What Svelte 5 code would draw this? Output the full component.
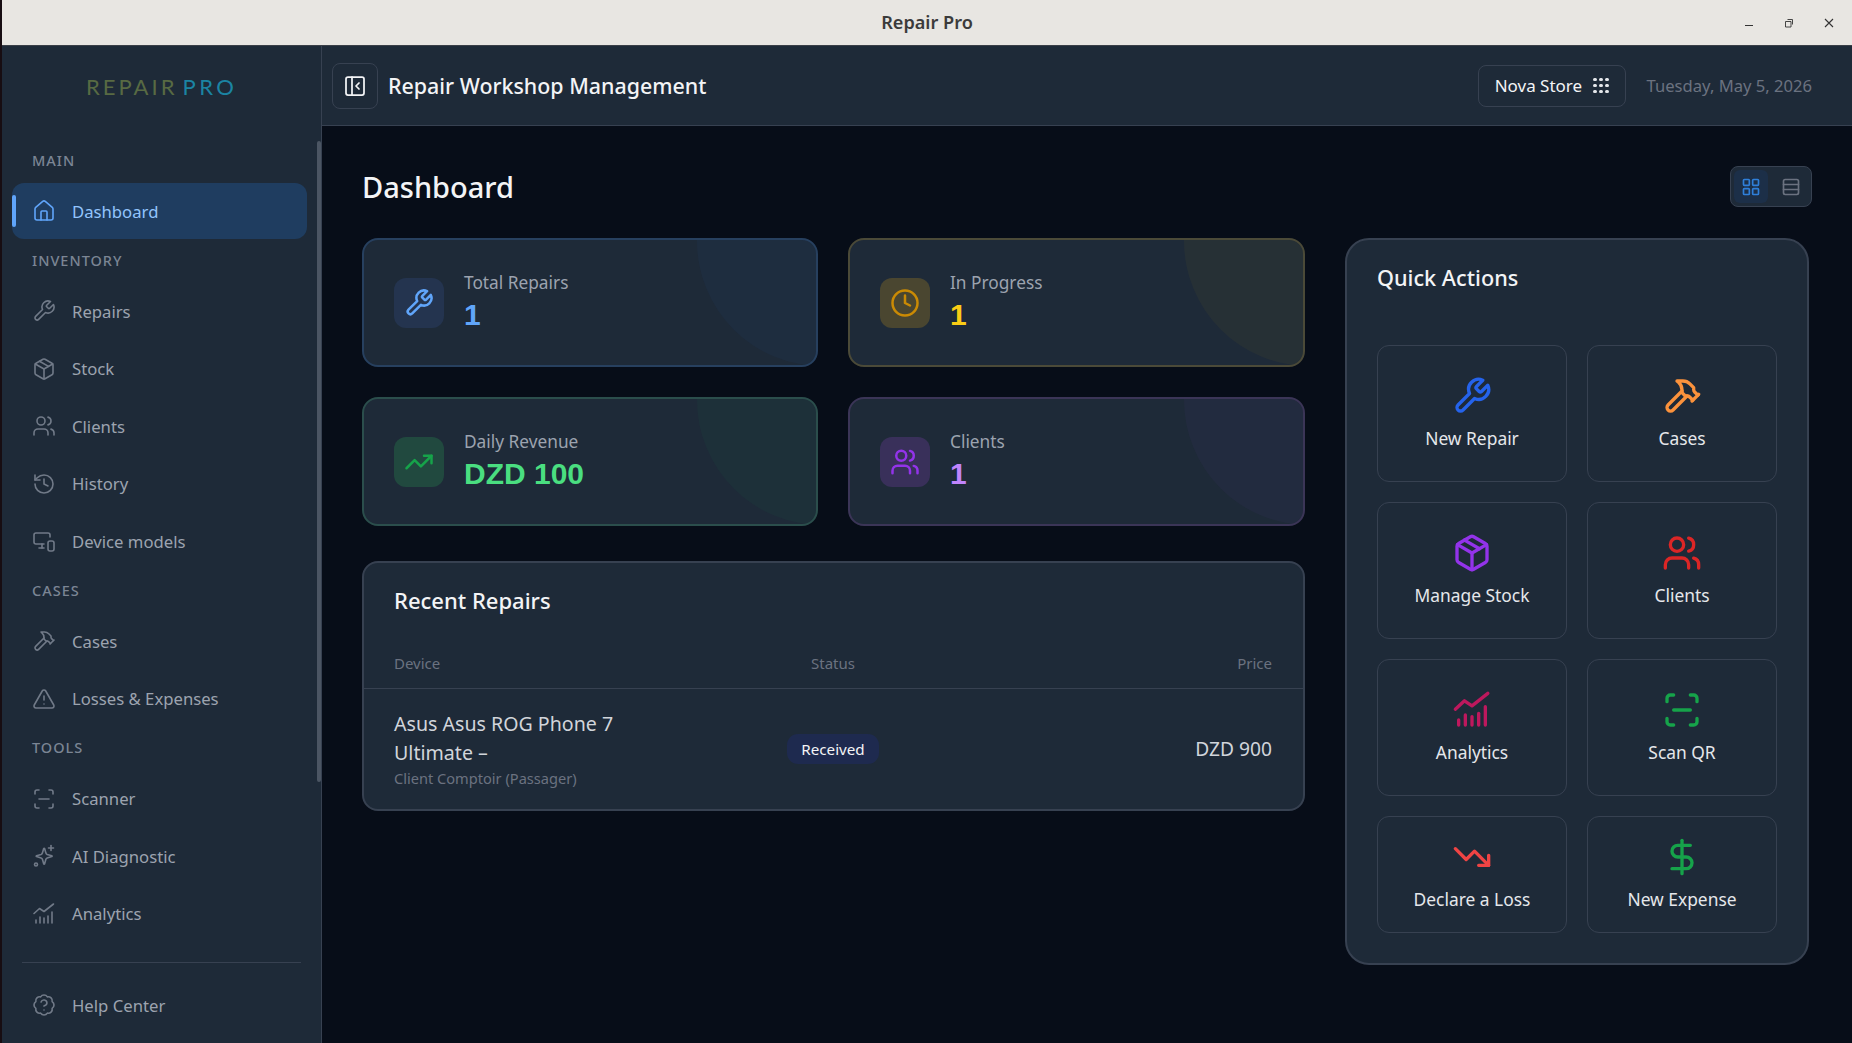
<script>
	const icons = {
		house: ["M15 21v-8a1 1 0 0 0-1-1h-4a1 1 0 0 0-1 1v8", "M3 10a2 2 0 0 1 .709-1.528l7-5.999a2 2 0 0 1 2.582 0l7 5.999A2 2 0 0 1 21 10v9a2 2 0 0 1-2 2H5a2 2 0 0 1-2-2z"],
		wrench: ["M14.7 6.3a1 1 0 0 0 0 1.4l1.6 1.6a1 1 0 0 0 1.4 0l3.77-3.77a6 6 0 0 1-7.94 7.94l-6.91 6.91a2.12 2.12 0 0 1-3-3l6.91-6.91a6 6 0 0 1 7.94-7.94l-3.76 3.76z"],
		box: ["M11 21.73a2 2 0 0 0 2 0l7-4A2 2 0 0 0 21 16V8a2 2 0 0 0-1-1.73l-7-4a2 2 0 0 0-2 0l-7 4A2 2 0 0 0 3 8v8a2 2 0 0 0 1 1.73z", "M12 22V12", "M3.29 7 12 12l8.71-5", "m7.5 4.27 9 5.15"],
		users: ["M16 21v-2a4 4 0 0 0-4-4H6a4 4 0 0 0-4 4v2", "M5 7a4 4 0 1 0 8 0a4 4 0 1 0-8 0", "M22 21v-2a4 4 0 0 0-3-3.87", "M16 3.13a4 4 0 0 1 0 7.75"],
		history: ["M3 12a9 9 0 1 0 9-9 9.75 9.75 0 0 0-6.74 2.74L3 8", "M3 3v5h5", "M12 7v5l4 2"],
		devices: ["M18 8V6a2 2 0 0 0-2-2H4a2 2 0 0 0-2 2v7a2 2 0 0 0 2 2h8", "M10 19v-3.96", "M7 19h5", "M18 12h2a2 2 0 0 1 2 2v6a2 2 0 0 1-2 2h-2a2 2 0 0 1-2-2v-6a2 2 0 0 1 2-2z"],
		hammer: ["m15 12-8.373 8.373a1 1 0 1 1-3-3L12 9", "m18 15 4-4", "m21.5 11.5-1.914-1.914A2 2 0 0 1 19 8.172V7l-2.26-2.26a6 6 0 0 0-4.202-1.756L9 2.96l.92.82A6.18 6.18 0 0 1 12 8.4V10l2 2h1.172a2 2 0 0 1 1.414.586L18.5 14.5"],
		alert: ["m21.73 18-8-14a2 2 0 0 0-3.48 0l-8 14A2 2 0 0 0 4 21h16a2 2 0 0 0 1.73-3", "M12 9v4", "M12 17h.01"],
		scan: ["M3 7V5a2 2 0 0 1 2-2h2", "M17 3h2a2 2 0 0 1 2 2v2", "M21 17v2a2 2 0 0 1-2 2h-2", "M7 21H5a2 2 0 0 1-2-2v-2", "M7 12h10"],
		spark: ["M10.4 15.2a2 2 0 0 0-1.3-1.3l-4.6-1.3a.5.5 0 0 1 0-.9l4.6-1.3a2 2 0 0 0 1.3-1.3l1.3-4.6a.5.5 0 0 1 .9 0l1.3 4.6a2 2 0 0 0 1.3 1.3l4.6 1.3a.5.5 0 0 1 0 .9l-4.6 1.3a2 2 0 0 0-1.3 1.3l-1.3 4.6a.5.5 0 0 1-.9 0z", "M19 1.5v5", "M21.5 4h-5", "M2.5 20.5a1.5 1.5 0 1 0 3 0a1.5 1.5 0 1 0-3 0"],
		chart: ["M2 11.5 7.5 6.5l4.5 3L21.5 2", "M4 21v-3", "M8 21v-6", "M12 21v-5", "M16 21v-7", "M20 21v-11"],
		help: ["M3.85 8.62a4 4 0 0 1 4.78-4.77 4 4 0 0 1 6.74 0 4 4 0 0 1 4.78 4.78 4 4 0 0 1 0 6.74 4 4 0 0 1-4.77 4.78 4 4 0 0 1-6.75 0 4 4 0 0 1-4.78-4.77 4 4 0 0 1 0-6.76Z", "M9.09 9a3 3 0 0 1 5.83 1c0 2-3 3-3 3", "M12 17h.01"],
		clock: ["M2 12a10 10 0 1 0 20 0a10 10 0 1 0-20 0", "M12 6v6l4 2"],
		trendUp: ["M16 7h6v6", "m22 7-8.5 8.5-5-5L2 17"],
		trendDown: ["M16 17h6v-6", "m22 17-8.5-8.5-5 5L2 7"],
		dollar: ["M12 2v20", "M17 5H9.5a3.5 3.5 0 0 0 0 7h5a3.5 3.5 0 0 1 0 7H6"],
		panel: ["M5 3h14a2 2 0 0 1 2 2v14a2 2 0 0 1-2 2H5a2 2 0 0 1-2-2V5a2 2 0 0 1 2-2z", "M9 3v18", "m16 15-3-3 3-3"],
		grid: ["M4 3h5a1 1 0 0 1 1 1v5a1 1 0 0 1-1 1H4a1 1 0 0 1-1-1V4a1 1 0 0 1 1-1z", "M15 3h5a1 1 0 0 1 1 1v5a1 1 0 0 1-1 1h-5a1 1 0 0 1-1-1V4a1 1 0 0 1 1-1z", "M4 14h5a1 1 0 0 1 1 1v5a1 1 0 0 1-1 1H4a1 1 0 0 1-1-1v-5a1 1 0 0 1 1-1z", "M15 14h5a1 1 0 0 1 1 1v5a1 1 0 0 1-1 1h-5a1 1 0 0 1-1-1v-5a1 1 0 0 1 1-1z"],
		rows: ["M5 3h14a2 2 0 0 1 2 2v14a2 2 0 0 1-2 2H5a2 2 0 0 1-2-2V5a2 2 0 0 1 2-2z", "M3 9h18", "M3 15h18"]
	};

	const sections = [
		{ title: "MAIN", items: [{ label: "Dashboard", icon: "house", active: true }] },
		{
			title: "INVENTORY",
			items: [
				{ label: "Repairs", icon: "wrench" },
				{ label: "Stock", icon: "box" },
				{ label: "Clients", icon: "users" },
				{ label: "History", icon: "history" },
				{ label: "Device models", icon: "devices" }
			]
		},
		{
			title: "CASES",
			items: [
				{ label: "Cases", icon: "hammer" },
				{ label: "Losses & Expenses", icon: "alert" }
			]
		},
		{
			title: "TOOLS",
			items: [
				{ label: "Scanner", icon: "scan" },
				{ label: "AI Diagnostic", icon: "spark" },
				{ label: "Analytics", icon: "chart" }
			]
		}
	];

	const stats = [
		{ label: "Total Repairs", value: "1", icon: "wrench", tone: "blue" },
		{ label: "In Progress", value: "1", icon: "clock", tone: "amber" },
		{ label: "Daily Revenue", value: "DZD 100", icon: "trendUp", tone: "green" },
		{ label: "Clients", value: "1", icon: "users", tone: "purple" }
	];

	const actions = [
		{ label: "New Repair", icon: "wrench", color: "#2563eb" },
		{ label: "Cases", icon: "hammer", color: "#fb923c" },
		{ label: "Manage Stock", icon: "box", color: "#9333ea" },
		{ label: "Clients", icon: "users", color: "#dc2626" },
		{ label: "Analytics", icon: "chart", color: "#be185d" },
		{ label: "Scan QR", icon: "scan", color: "#16a34a" },
		{ label: "Declare a Loss", icon: "trendDown", color: "#ef4444" },
		{ label: "New Expense", icon: "dollar", color: "#16a34a" }
	];
</script>

{#snippet icon(name, size = 24, width = 1.6)}
	<svg class="ic" viewBox="0 0 24 24" width={size} height={size} fill="none" stroke="currentColor" stroke-width={width} stroke-linecap="round" stroke-linejoin="round">
		{#each icons[name] as d}
			<path {d} />
		{/each}
	</svg>
{/snippet}

<div class="window">
	<div class="titlebar">
		<div class="tb-side"></div>
		<div class="tb-title">Repair Pro</div>
		<div class="tb-side tb-controls">
			<svg viewBox="0 0 10 10" width="10" height="10"><path d="M1 7.5h8" stroke="#333" fill="none" /></svg>
			<svg viewBox="0 0 10 10" width="10" height="10"><path d="M1.5 3.5h5.5v5.5h-5.5z M3.5 1.5h5v5" stroke="#333" stroke-width=".9" fill="none" /></svg>
			<svg viewBox="0 0 10 10" width="10" height="10"><path d="M1 1l8 8M9 1l-8 8" stroke="#333" stroke-width="1.1" fill="none" /></svg>
		</div>
	</div>

	<div class="app">
		<aside class="sidebar">
			<div class="logo"><span class="logo-a">REPAIR</span><span class="logo-b">PRO</span></div>
			<div class="thumb"></div>
			<nav>
				{#each sections as section}
					<div class="section-label">{section.title}</div>
					{#each section.items as item}
						<div class="nav-item" class:active={item.active}>
							{@render icon(item.icon)}
							<span>{item.label}</span>
						</div>
					{/each}
				{/each}
			</nav>
			<div class="side-foot">
				<div class="nav-item">
					{@render icon("help")}
					<span>Help Center</span>
				</div>
			</div>
		</aside>

		<div class="content">
			<header class="topbar">
				<button class="toggle">{@render icon("panel", 24, 1.75)}</button>
				<h1>Repair Workshop Management</h1>
				<div class="store">
					<span>Nova Store</span>
					<div class="dots">
						{#each Array(9) as _}<i></i>{/each}
					</div>
				</div>
				<div class="date">Tuesday, May 5, 2026</div>
			</header>

			<main>
				<div class="page-head">
					<h2>Dashboard</h2>
					<div class="view-switch">
						<div class="view on">{@render icon("grid", 20, 2)}</div>
						<div class="view">{@render icon("rows", 20, 2)}</div>
					</div>
				</div>

				<div class="columns">
					<div class="left">
						<div class="stats">
							{#each stats as stat}
								<div class="stat {stat.tone}">
									<div class="blob"></div>
									<div class="stat-icon">{@render icon(stat.icon, 30, 2)}</div>
									<div class="stat-text">
										<div class="stat-label">{stat.label}</div>
										<div class="stat-value">{stat.value}</div>
									</div>
								</div>
							{/each}
						</div>

						<section class="recent">
							<h3>Recent Repairs</h3>
							<div class="table-head">
								<span>Device</span>
								<span class="center">Status</span>
								<span class="right">Price</span>
							</div>
							<div class="table-row">
								<div class="device">
									<div class="device-name">Asus Asus ROG Phone 7 Ultimate –</div>
									<div class="device-client">Client Comptoir (Passager)</div>
								</div>
								<div class="center"><span class="badge">Received</span></div>
								<div class="right price">DZD 900</div>
							</div>
						</section>
					</div>

					<section class="quick">
						<h3>Quick Actions</h3>
						<div class="action-grid">
							{#each actions as action}
								<div class="action">
									<div class="action-icon" style="color: {action.color}">{@render icon(action.icon, 40, 2)}</div>
									<span>{action.label}</span>
								</div>
							{/each}
						</div>
					</section>
				</div>
			</main>
		</div>
	</div>
</div>

<style>
	:global(html), :global(body) {
		margin: 0;
		height: 100%;
		overflow: hidden;
		background: #170d12;
	}

	.window {
		height: 1043px;
		padding-left: 2px;
		display: flex;
		flex-direction: column;
		font-family: "Noto Sans", "Open Sans", sans-serif;
		color: #e5e7eb;
		box-sizing: border-box;
	}

	.ic {
		display: block;
		flex: none;
	}

	.titlebar {
		height: 45px;
		flex: none;
		display: grid;
		grid-template-columns: 1fr auto 1fr;
		align-items: center;
		background: #e8e6e2;
		border-bottom: 1px solid #3a3f47;
	}

	.tb-title {
		padding-bottom: 1px;
		font-size: 18.1px;
		font-weight: 600;
		color: #3b3b3b;
	}

	.tb-controls {
		display: flex;
		justify-content: flex-end;
		gap: 30px;
		padding-right: 18px;
	}

	.app {
		flex: 1;
		min-height: 0;
		display: flex;
	}

	.sidebar {
		position: relative;
		width: 320px;
		flex: none;
		box-sizing: border-box;
		background: #1e2a38;
		border-right: 1px solid #374151;
		display: flex;
		flex-direction: column;
	}

	.thumb {
		position: absolute;
		right: 0;
		top: 95px;
		width: 4px;
		height: 641px;
		border-radius: 2px;
		background: #4b5563;
	}

	.logo {
		height: 93px;
		flex: none;
		box-sizing: border-box;
		padding: 0 0 12px 84px;
		display: flex;
		align-items: center;
		gap: 5px;
		font-family: "Lato", sans-serif;
		font-weight: 400;
		font-size: 22px;
	}

	.logo-a { color: #586a43; letter-spacing: 3px; }
	.logo-b { color: #1b84a3; letter-spacing: 3.5px; }

	.section-label {
		height: 20px;
		line-height: 20px;
		margin: 10.5px 0 13.5px 30px;
		font-size: 14.5px;
		font-weight: 500;
		letter-spacing: 1px;
		color: #7b8594;
	}

	.nav-item {
		position: relative;
		height: 56px;
		margin: 0 14px 1.5px 10px;
		padding-left: 20px;
		box-sizing: border-box;
		display: flex;
		align-items: center;
		gap: 16px;
		border-radius: 12px;
		font-size: 16.7px;
		color: #9ca3af;
	}

	.nav-item .ic {
		color: #717a88;
	}

	.nav-item.active {
		background: #1f3d60;
		color: #93c5fd;
	}

	.nav-item.active .ic {
		color: #60a5fa;
	}

	.nav-item.active::before {
		content: "";
		position: absolute;
		left: 0;
		top: 12px;
		bottom: 12px;
		width: 4px;
		border-radius: 2px;
		background: #60a5fa;
	}

	.side-foot {
		margin: 19px 20px 0 20px;
		padding-top: 14px;
		border-top: 1px solid #374151;
	}

	.side-foot .nav-item {
		margin: 0 0 0 -10px;
	}

	.content {
		flex: 1;
		min-width: 0;
		display: flex;
		flex-direction: column;
		background: #070d18;
	}

	.topbar {
		height: 80px;
		flex: none;
		box-sizing: border-box;
		background: #1e2a38;
		border-bottom: 1px solid #374151;
		display: flex;
		align-items: center;
		padding: 0 40px 0 10px;
	}

	.toggle {
		width: 46px;
		height: 46px;
		padding: 0;
		display: flex;
		align-items: center;
		justify-content: center;
		background: none;
		color: #f3f4f6;
		border: 1px solid #374151;
		border-radius: 8px;
	}

	h1 {
		margin: 0 0 0 10px;
		font-size: 21.4px;
		font-weight: 500;
		color: #f3f4f6;
		flex: 1;
	}

	.store {
		height: 42px;
		box-sizing: border-box;
		padding: 0 16px;
		display: flex;
		align-items: center;
		gap: 11px;
		border: 1px solid #374151;
		border-radius: 8px;
		font-size: 17px;
		color: #f3f4f6;
	}

	.dots {
		display: grid;
		grid-template-columns: repeat(3, 3.5px);
		gap: 2.5px;
	}

	.dots i {
		width: 3.5px;
		height: 3.5px;
		border-radius: 50%;
		background: #e5e7eb;
	}

	.date {
		margin-left: 21px;
		font-size: 16.6px;
		color: #6b7280;
	}

	main {
		flex: 1;
		padding: 40px 40px 0 40px;
	}

	.page-head {
		display: flex;
		justify-content: space-between;
		align-items: center;
		height: 41px;
		margin-bottom: 31px;
	}

	h2 {
		margin: 0;
		font-size: 29px;
		font-weight: 500;
		color: #f3f4f6;
	}

	.view-switch {
		display: flex;
		box-sizing: border-box;
		width: 82px;
		height: 41px;
		padding: 3px 0 3px 3px;
		background: #1e2a38;
		border: 1px solid #374151;
		border-radius: 8px;
	}

	.view {
		flex: 1;
		padding-left: 2px;
		display: flex;
		align-items: center;
		justify-content: center;
		color: #6b7280;
		border-radius: 6px;
	}

	.view.on {
		flex: none;
		width: 34px;
		padding-left: 0;
		background: #1c2f48;
		color: #2f7fd9;
	}

	.columns {
		display: grid;
		grid-template-columns: 943px 464px;
		gap: 40px;
		align-items: start;
	}

	.stats {
		display: grid;
		grid-template-columns: 456px 1fr;
		gap: 30px;
	}

	.stat {
		position: relative;
		overflow: hidden;
		height: 129px;
		box-sizing: border-box;
		padding: 0 30px;
		display: flex;
		align-items: center;
		gap: 20px;
		background: #1e2a38;
		border: 2px solid var(--edge);
		border-radius: 16px;
	}

	.blue { --edge: #27405f; --soft: rgba(59, 130, 246, .04); --box: #24344f; --ic: #60a5fa; --val: #60a5fa; }
	.amber { --edge: #4b4a38; --soft: rgba(234, 179, 8, .045); --box: #4a4630; --ic: #ca8a04; --val: #facc15; }
	.green { --edge: #2b4e4c; --soft: rgba(34, 197, 94, .04); --box: #21493f; --ic: #16a34a; --val: #4ade80; }
	.purple { --edge: #3b3557; --soft: rgba(168, 85, 247, .035); --box: #39305a; --ic: #9333ea; --val: #c084fc; }

	.blob {
		position: absolute;
		top: -124px;
		right: -131px;
		width: 250px;
		height: 250px;
		border-radius: 50%;
		background: var(--soft);
	}

	.stat-icon {
		width: 50px;
		height: 50px;
		flex: none;
		display: flex;
		align-items: center;
		justify-content: center;
		border-radius: 12px;
		background: var(--box);
		color: var(--ic);
	}

	.stat-text {
		position: relative;
		margin-top: -1px;
	}

	.stat-label {
		font-size: 17.3px;
		line-height: 24px;
		color: #9ca3af;
	}

	.stat-value {
		margin-top: 2px;
		font-family: "Liberation Sans", sans-serif;
		font-size: 30px;
		line-height: 36px;
		font-weight: 700;
		color: var(--val);
	}

	.recent {
		margin-top: 35px;
		height: 250px;
		box-sizing: border-box;
		background: #1e2a38;
		border: 2px solid #374151;
		border-radius: 16px;
	}

	h3 {
		margin: 0;
		line-height: 30px;
		font-weight: 500;
		color: #f3f4f6;
	}

	.recent h3 {
		padding: 22px 30px 0;
		height: 55px;
		font-size: 22px;
	}

	.quick h3 {
		font-size: 21.7px;
	}

	.table-head,
	.table-row {
		display: grid;
		grid-template-columns: 1fr 1fr 1fr;
		align-items: center;
		padding: 0 31px 0 30px;
	}

	.table-head {
		height: 45px;
		padding-bottom: 3px;
		border-bottom: 1px solid #374151;
		font-size: 15px;
		color: #6b7280;
	}

	.table-row {
		height: 119px;
		padding-bottom: 1px;
	}

	.center { text-align: center; }
	.right { text-align: right; }

	.device {
		max-width: 250px;
	}

	.device-name {
		font-size: 19.6px;
		line-height: 29.5px;
		color: #d1d5db;
	}

	.device-client {
		font-size: 14.6px;
		line-height: 21px;
		color: #6b7280;
	}

	.badge {
		display: inline-block;
		padding: 0 14px;
		line-height: 30px;
		border-radius: 11px;
		font-size: 15.2px;
		color: #f3f4f6;
		background: #1e2a4f;
	}

	.price {
		font-size: 19.2px;
		color: #d1d5db;
	}

	.quick {
		height: 727px;
		box-sizing: border-box;
		padding: 23px 30px 0;
		background: #1e2a38;
		border: 2px solid #374151;
		border-radius: 24px;
	}

	.action-grid {
		margin-top: 52px;
		display: grid;
		grid-template-columns: 190px 190px;
		grid-template-rows: 137px 137px 137px 117px;
		gap: 20px;
	}

	.action {
		display: flex;
		flex-direction: column;
		align-items: center;
		justify-content: center;
		gap: 10px;
		padding-bottom: 2px;
		border: 1px solid #374151;
		border-radius: 12px;
		font-size: 17.4px;
		color: #e5e7eb;
	}
</style>
